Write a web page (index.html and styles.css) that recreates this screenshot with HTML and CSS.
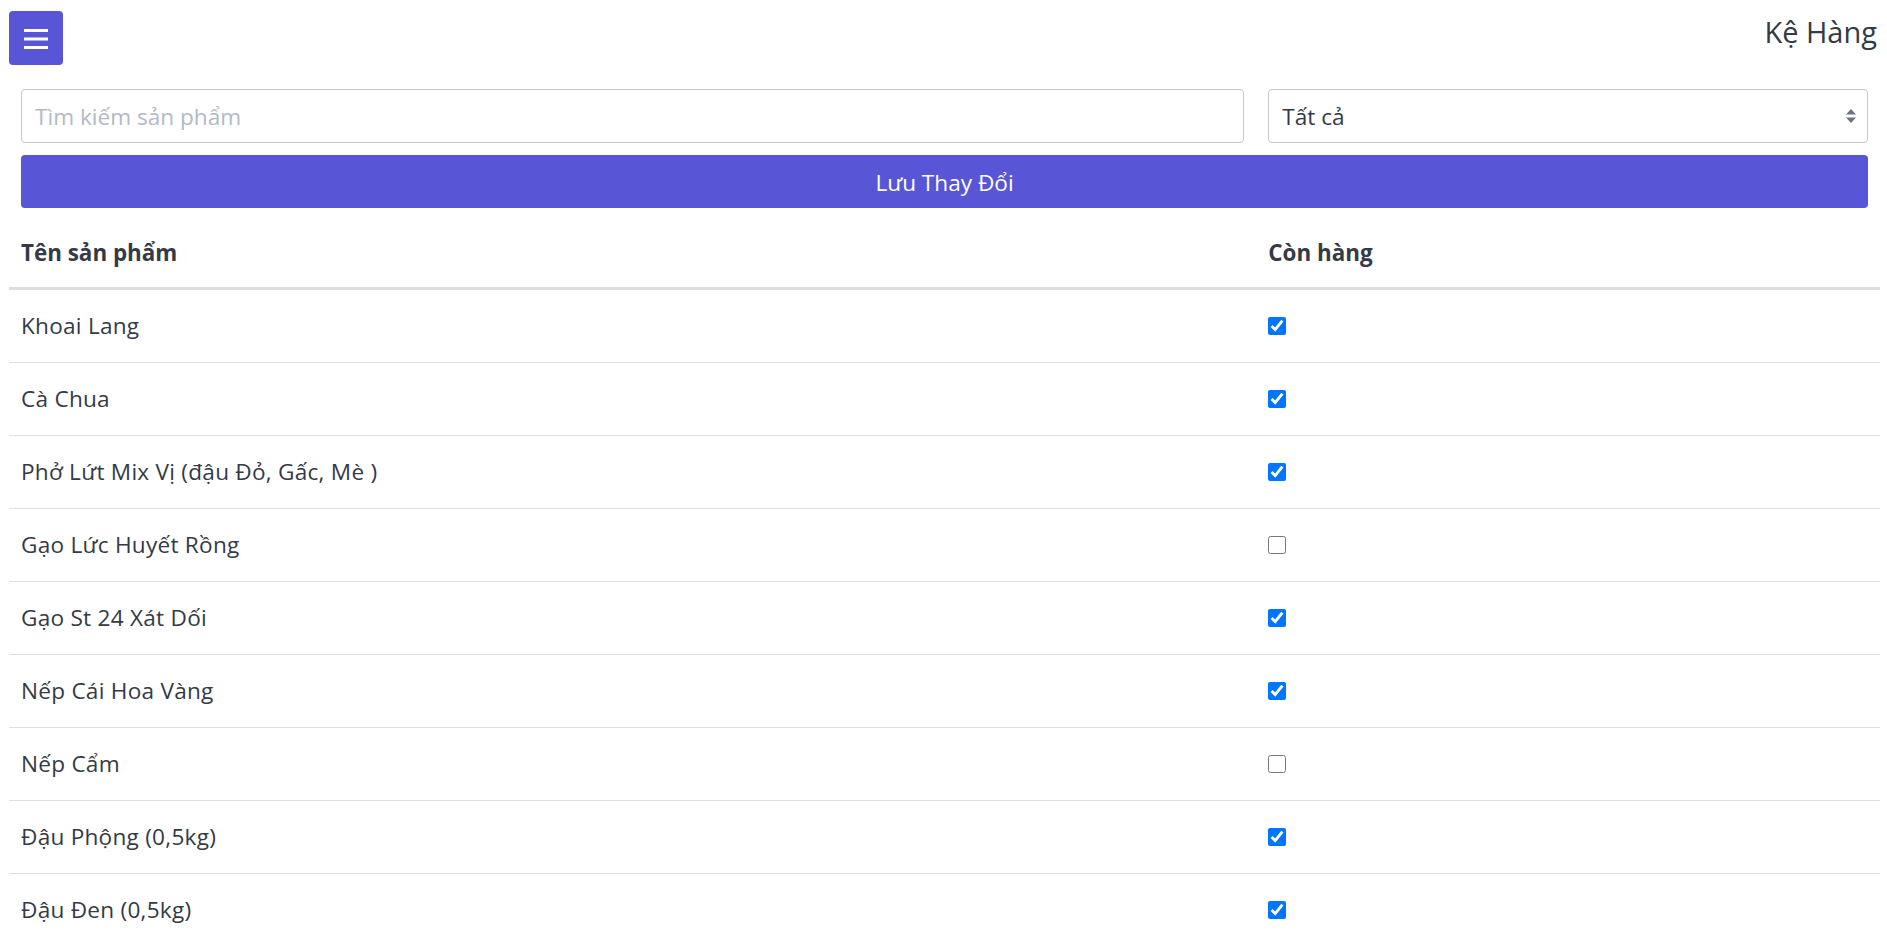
FILE: index.html
```html
<!DOCTYPE html>
<html lang="vi">
<head>
<meta charset="utf-8">
<title>Kệ Hàng</title>
<link rel="stylesheet" href="styles.css">
</head>
<body>
<div class="page">
  <header class="topbar">
    <button class="menu-btn" type="button" aria-label="Menu">
      <svg width="24" height="20" viewBox="0 0 24 20"><rect x="0" y="0" width="24" height="3" fill="#fff"/><rect x="0" y="8.5" width="24" height="3" fill="#fff"/><rect x="0" y="17" width="24" height="3" fill="#fff"/></svg>
    </button>
    <h1 class="title">Kệ Hàng</h1>
  </header>

  <div class="filters">
    <div class="col-main"><input class="field" type="text" placeholder="Tìm kiếm sản phẩm"></div>
    <div class="col-side">
      <div class="select-wrap">
        <select class="field select"><option>Tất cả</option></select>
        <svg class="select-arrow" width="10" height="14" viewBox="0 0 10 14"><path d="M5 0 L10 5.5 L0 5.5 Z" fill="#6c7382"/><path d="M0 8.5 L10 8.5 L5 14 Z" fill="#6c7382"/></svg>
      </div>
    </div>
  </div>

  <div class="save-row"><button class="save-btn" type="button">Lưu Thay Đổi</button></div>

  <table class="products">
    <thead>
      <tr><th class="c-name">Tên sản phẩm</th><th>Còn hàng</th></tr>
    </thead>
    <tbody>
      <tr><td>Khoai Lang</td><td><input type="checkbox" class="chk" checked></td></tr>
      <tr><td>Cà Chua</td><td><input type="checkbox" class="chk" checked></td></tr>
      <tr><td>Phở Lứt Mix Vị (đậu Đỏ, Gấc, Mè )</td><td><input type="checkbox" class="chk" checked></td></tr>
      <tr><td>Gạo Lức Huyết Rồng</td><td><input type="checkbox" class="chk"></td></tr>
      <tr><td>Gạo St 24 Xát Dối</td><td><input type="checkbox" class="chk" checked></td></tr>
      <tr><td>Nếp Cái Hoa Vàng</td><td><input type="checkbox" class="chk" checked></td></tr>
      <tr><td>Nếp Cẩm</td><td><input type="checkbox" class="chk"></td></tr>
      <tr><td>Đậu Phộng (0,5kg)</td><td><input type="checkbox" class="chk" checked></td></tr>
      <tr><td>Đậu Đen (0,5kg)</td><td><input type="checkbox" class="chk" checked></td></tr>
    </tbody>
  </table>
</div>
</body>
</html>
```

FILE: styles.css
```css
* { box-sizing: border-box; }
html, body { margin: 0; padding: 0; background: #fff; }
body {
  font-family: "Open Sans", "Noto Sans", sans-serif;
  color: #343a46;
  font-size: 22.6px;
}
.page { padding: 11px 7px 0 9px; }

.topbar {
  display: flex;
  justify-content: space-between;
  align-items: flex-start;
  height: 54px;
}
.menu-btn {
  width: 54px;
  height: 54px;
  background: #5856d6;
  border: none;
  border-radius: 4px;
  padding: 2px 0 0 0;
  display: flex;
  align-items: center;
  justify-content: center;
}
.title {
  margin: 0 3px 0 0;
  font-size: 29px;
  font-weight: 400;
  line-height: 42px;
  color: #343a46;
}

.filters {
  display: flex;
  margin-top: 24px;
}
.col-main { width: 66.6667%; padding: 0 12px; }
.col-side { width: 33.3333%; padding: 0 12px; }
.field {
  width: 100%;
  height: 54px;
  border: 1px solid #c4c8d0;
  border-radius: 4px;
  padding: 0 13px;
  font-family: inherit;
  font-size: 22.6px;
  color: #343a46;
  background: #fff;
  outline: none;
}
.field::placeholder { color: #b3b9c5; }
.select-wrap { position: relative; }
.select { appearance: none; -webkit-appearance: none; }
.select-arrow {
  position: absolute;
  right: 12px;
  top: 20px;
  pointer-events: none;
}

.save-row { padding: 0 12px; margin-top: 12px; }
.save-btn {
  width: 100%;
  height: 53px;
  padding-top: 2px;
  background: #5856d6;
  color: #fff;
  border: none;
  border-radius: 4px;
  font-family: inherit;
  font-size: 22.6px;
}

.products {
  width: 100%;
  border-collapse: collapse;
  margin-top: 11px;
}
.products th {
  text-align: left;
  font-weight: 700;
  font-size: 22.4px;
  padding: 20px 12px;
  line-height: 28px;
  border-bottom: 3px solid #dcdee4;
}
.products th.c-name { width: 66.6667%; }
.products td {
  padding: 22px 12px;
  line-height: 28px;
  letter-spacing: 0.25px;
  border-bottom: 1px solid #dfe0e6;
  vertical-align: middle;
}
.chk {
  width: 18px;
  height: 18px;
  margin: 0;
  display: block;
}
```
